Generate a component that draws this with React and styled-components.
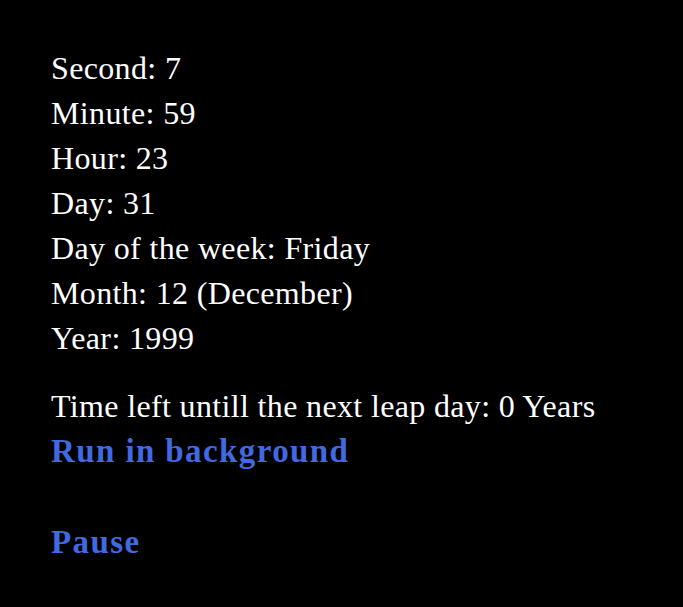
import React from 'react';
import styled, { createGlobalStyle } from 'styled-components';

const GlobalStyle = createGlobalStyle`
  html, body {
    margin: 0;
    padding: 0;
    background: #000;
  }
  body {
    font-family: Georgia, "Liberation Serif", "DejaVu Serif", serif;
  }
`;

const clock = [
  ['Second', '7'],
  ['Minute', '59'],
  ['Hour', '23'],
  ['Day', '31'],
  ['Day of the week', 'Friday'],
  ['Month', '12 (December)'],
  ['Year', '1999'],
];

const App = () => (
  <>
    <GlobalStyle />
    <Page>
      <ClockList>
        {clock.map(([label, value]) => (
          <Line key={label}>
            {label}: {value}
          </Line>
        ))}
      </ClockList>
      <LeapLine>Time left untill the next leap day: 0 Years</LeapLine>
      <Controls>
        <ActionButton>Run in background</ActionButton>
        <ActionButton>Pause</ActionButton>
      </Controls>
    </Page>
  </>
);

export default App;

const Page = styled.div`
  min-height: 607px;
  box-sizing: border-box;
  padding: 46px 0 0 51px;
  color: #fff;
  font-size: 32px;
  line-height: 45px;
  letter-spacing: 0.35px;
`;

const ClockList = styled.div`
  display: flex;
  flex-direction: column;
`;

const Line = styled.div`
  white-space: nowrap;
`;

const LeapLine = styled(Line)`
  margin-top: 23px;
`;

const Controls = styled.div`
  display: flex;
  flex-direction: column;
  align-items: flex-start;
  gap: 46px;
`;

const ActionButton = styled.button`
  background: none;
  border: 0;
  padding: 0;
  font: inherit;
  font-size: 33px;
  font-weight: bold;
  line-height: 45px;
  letter-spacing: 1.4px;
  color: #4169e1;
  cursor: pointer;
`;
